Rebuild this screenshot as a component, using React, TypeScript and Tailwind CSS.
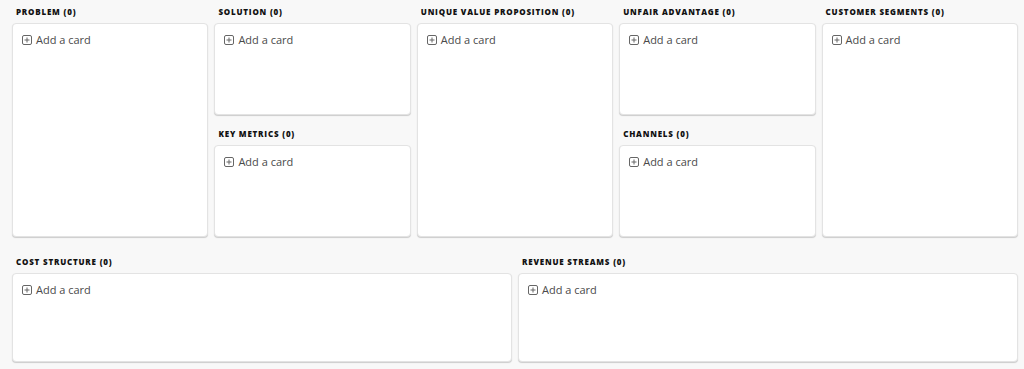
const font = { fontFamily: '"Open Sans", "Liberation Sans", sans-serif' }

function PlusBox() {
  return (
    <svg width="10" height="10" viewBox="0 0 10 10" className="shrink-0">
      <rect x="0.5" y="0.5" width="9" height="9" rx="1.5" fill="none" stroke="#666" strokeWidth="1" />
      <path d="M5 2.5v5M2.5 5h5" stroke="#666" strokeWidth="1" />
    </svg>
  )
}

function Section({ title, className = '' }: { title: string; className?: string }) {
  return (
    <div className={`flex flex-col ${className}`}>
      <h2 className="h-[23px] shrink-0 pl-1 pt-[6px] text-[8px] font-extrabold leading-[11px] tracking-[0.1em] text-[#111]">
        {title} (0)
      </h2>
      <div className="flex-1 rounded-[4px] border border-[#e3e3e3] bg-white shadow-[0_1px_1px_rgba(0,0,0,0.18)]">
        <button className="flex items-center gap-[4px] pl-[9px] pt-[9px] text-[11px] leading-[14px] text-[#4a4a4a]">
          <PlusBox />
          Add a card
        </button>
      </div>
    </div>
  )
}

export default function App() {
  return (
    <div className="h-[369px] w-[1024px] bg-[#f8f8f8] pl-3 pr-[6px]" style={font}>
      {/* Top row */}
      <div className="grid h-[237px] grid-cols-5 gap-x-[6px]">
        <Section title="PROBLEM" />
        <div className="flex flex-col gap-[7px]">
          <Section title="SOLUTION" className="flex-1" />
          <Section title="KEY METRICS" className="flex-1" />
        </div>
        <Section title="UNIQUE VALUE PROPOSITION" />
        <div className="flex flex-col gap-[7px]">
          <Section title="UNFAIR ADVANTAGE" className="flex-1" />
          <Section title="CHANNELS" className="flex-1" />
        </div>
        <Section title="CUSTOMER SEGMENTS" />
      </div>

      {/* Bottom row */}
      <div className="mt-[13px] grid h-[112px] grid-cols-2 gap-x-[6px]">
        <Section title="COST STRUCTURE" />
        <Section title="REVENUE STREAMS" />
      </div>
    </div>
  )
}
